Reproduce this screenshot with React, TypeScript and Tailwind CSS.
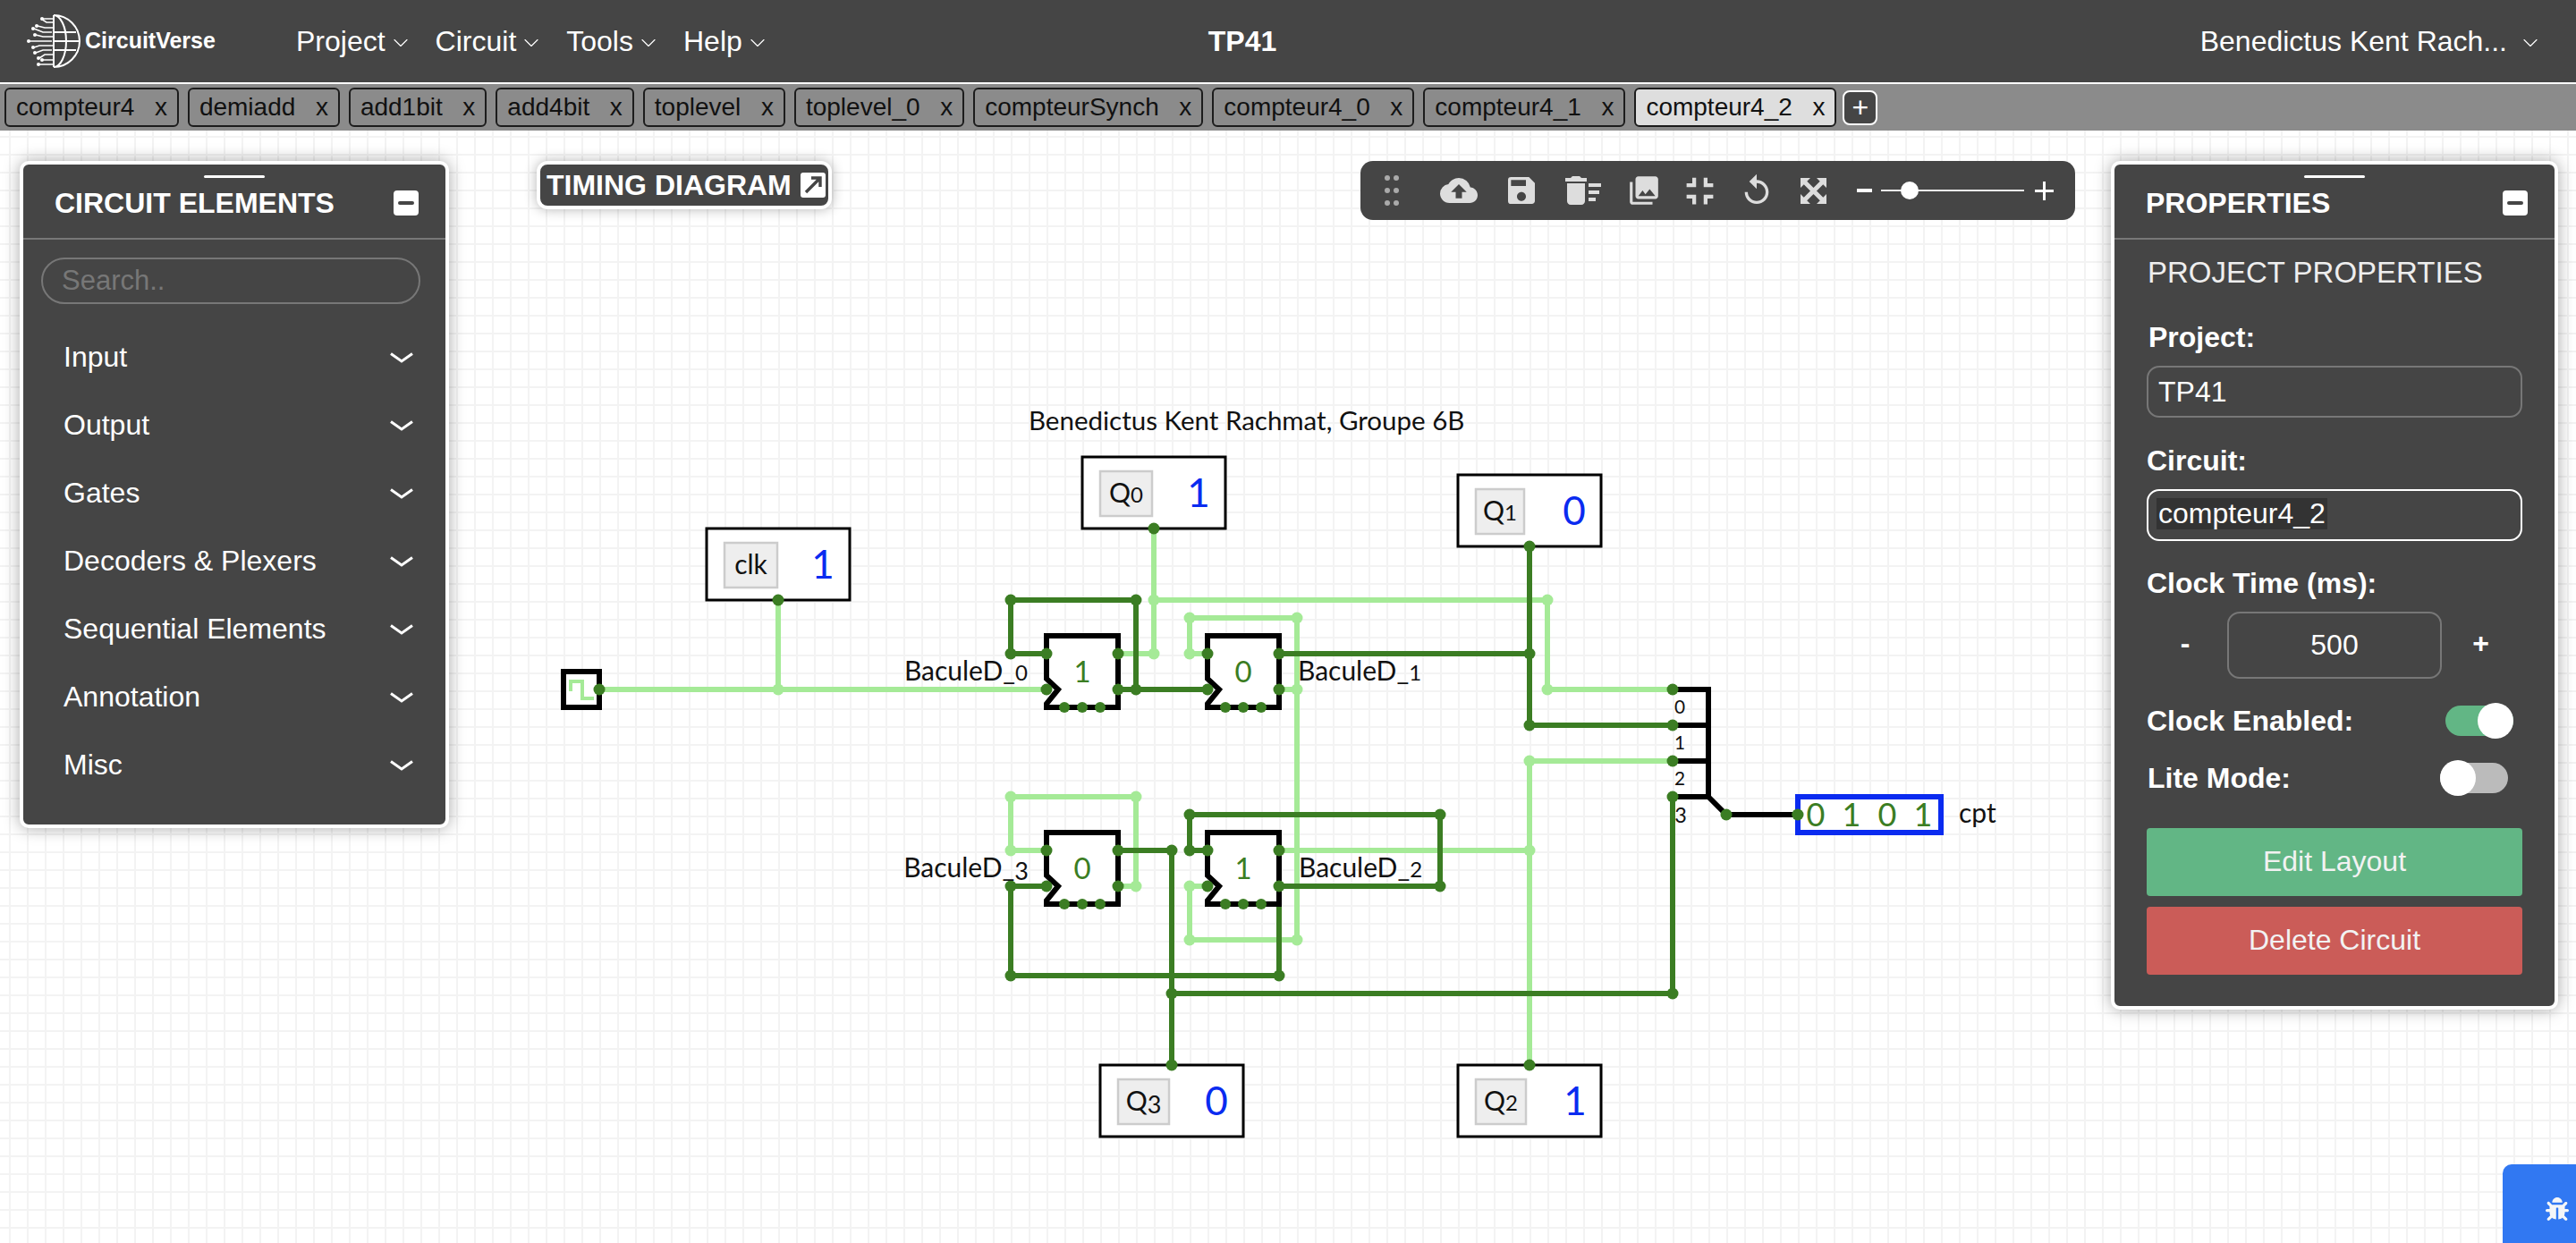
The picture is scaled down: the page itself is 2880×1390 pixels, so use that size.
import { ChevronDown } from 'lucide-react';
import { FaBug } from 'react-icons/fa';
import {
  MdCloudUpload,
  MdDeleteSweep,
  MdFullscreenExit,
  MdPhotoLibrary,
  MdReplay,
  MdSave,
} from 'react-icons/md';

const DARK = '#3b7d23';
const LIGHT = '#a5ea97';
const BLUE = '#0a2bf0';

const tabs = ['compteur4', 'demiadd', 'add1bit', 'add4bit', 'toplevel', 'toplevel_0', 'compteurSynch', 'compteur4_0', 'compteur4_1', 'compteur4_2'];
const menus = ['Project', 'Circuit', 'Tools', 'Help'];
const categories = ['Input', 'Output', 'Gates', 'Decoders & Plexers', 'Sequential Elements', 'Annotation', 'Misc'];

// wires as svg paths, light ones go under the dark ones
const lightWires = [
  'M670 771H1170', 'M870 671V771', 'M1290 591V731H1250', 'M1290 671H1730V771H1870',
  'M1350 731H1330V691H1450V1051H1330V991H1350', 'M1430 771H1450',
  'M1170 951H1130V891H1270V991H1250', 'M1430 951H1710', 'M1710 1191V851H1870',
];
const darkWires = [
  'M1170 731H1130V671H1270V771', 'M1250 771H1350', 'M1430 731H1710', 'M1710 611V811H1870',
  'M1250 951H1310V1191', 'M1310 1111H1870V891', 'M1170 991H1130V1091H1430V991',
  'M1350 951H1330V911H1610V991H1430',
];
const lightNodes = [
  [870, 771], [1290, 671], [1290, 731], [1330, 691], [1450, 691], [1330, 731], [1450, 771], [1730, 671], [1730, 771],
  [1710, 851], [1710, 951], [1130, 891], [1270, 891], [1130, 951], [1270, 991], [1330, 991], [1330, 1051], [1450, 1051],
];
const darkNodes = [
  [670, 771], [870, 671], [1290, 591], [1710, 611], [1310, 1191], [1710, 1191],
  [1130, 671], [1270, 671], [1130, 731], [1270, 771], [1710, 731], [1710, 811], [1130, 991], [1130, 1091], [1430, 1091],
  [1310, 951], [1310, 1111], [1870, 1111], [1330, 911], [1610, 911], [1330, 951], [1610, 991],
  [1870, 771], [1870, 811], [1870, 851], [1870, 891], [1930, 911], [2010, 911],
];
const flipFlops = [
  { x: 1170, y: 711, value: '1' },
  { x: 1350, y: 711, value: '0' },
  { x: 1170, y: 931, value: '0' },
  { x: 1350, y: 931, value: '1' },
];
const probes = [
  { x: 790, y: 591, label: 'clk', value: '1', lx: 810, lw: 59, vx: 920 },
  { x: 1210, y: 511, label: 'Q0', value: '1', lx: 1230, lw: 58, vx: 1340 },
  { x: 1630, y: 531, label: 'Q1', value: '0', lx: 1650, lw: 54, vx: 1760 },
  { x: 1230, y: 1191, label: 'Q3', value: '0', lx: 1250, lw: 57, vx: 1360 },
  { x: 1630, y: 1191, label: 'Q2', value: '1', lx: 1650, lw: 56, vx: 1761 },
];

// the canvas font has old style figures, so digits sit lower and smaller
function OldStyle({ text }: { text: string }) {
  return (
    <>
      {text.split(/(\d)/).map((part, i) => {
        if (!/\d/.test(part)) return part;
        if (part === '3' || part === '6') {
          return part === '3' ? <tspan key={i} fontSize="0.9em" dy="0.12em">{part}</tspan> : <tspan key={i}>{part}</tspan>;
        }
        return <tspan key={i} fontSize="0.8em">{part}</tspan>;
      })}
    </>
  );
}

function Logo() {
  return (
    <svg width="62" height="62" viewBox="0 0 62 62" fill="none" stroke="white" strokeWidth="2">
      <path d="M30 2A29 29 0 0 1 30 60M30 2A14 29 0 0 1 30 60M30 2V60M30 21H55M30 31H59M30 41H55" />
      <path d="M30 6H18M30 10H22L16 6M30 16H20L12 14M28 21H18L8 17M30 26H18L10 24M28 31H2M30 36H14L8 38M28 41H18L10 44M30 46H20L14 50M30 52H18M30 57H14" strokeWidth="1.6" />
      <g fill="white" stroke="none">
        <circle cx="17" cy="6" r="2" /><circle cx="11" cy="14" r="2" /><circle cx="7" cy="17" r="2" />
        <circle cx="9" cy="24" r="2" /><circle cx="2" cy="31" r="2" /><circle cx="7" cy="38" r="2" />
        <circle cx="9" cy="44" r="2" /><circle cx="13" cy="50" r="2" /><circle cx="17" cy="52" r="2" /><circle cx="13" cy="57" r="2" />
      </g>
    </svg>
  );
}

function Navbar() {
  return (
    <nav className="flex h-[92px] shrink-0 items-center bg-[#454545] text-[32px] text-white">
      <div className="ml-[30px] flex w-[270px] items-center gap-[3px]">
        <Logo />
        <span className="text-[25px] font-bold">CircuitVerse</span>
      </div>
      <div className="ml-[31px] flex items-center gap-[25px]">
        {menus.map((m) => (
          <div key={m} className="flex items-center gap-[3px]">
            <span>{m}</span>
            <ChevronDown size={28} strokeWidth={1} className="mt-[3px]" />
          </div>
        ))}
      </div>
      <span className="ml-[490px] font-bold">TP41</span>
      <div className="ml-auto mr-[37px] flex items-center gap-[12px]">
        <span>Benedictus Kent Rach...</span>
        <ChevronDown size={28} strokeWidth={1} className="mt-[3px]" />
      </div>
    </nav>
  );
}

function TabBar() {
  return (
    <div className="mt-[2px] flex h-[52px] shrink-0 items-center gap-[10px] bg-[#8b8b8b] pl-[5px] text-[28px] text-[#111]">
      {tabs.map((t) => (
        <div
          key={t}
          className={
            t === 'compteur4_2'
              ? 'flex h-[44px] items-center gap-[22.6px] rounded-[6px] border-2 border-[#1c1c1c] bg-[#dedede] px-[11px]'
              : 'flex h-[44px] items-center gap-[22.6px] rounded-[6px] border-2 border-[#1c1c1c] px-[11px]'
          }
        >
          <span>{t}</span>
          <span>x</span>
        </div>
      ))}
      <div className="-ml-[3px] flex h-[39px] w-[39px] items-center justify-center rounded-[8px] border-2 border-white bg-[#454545] text-[32px] text-white">+</div>
    </div>
  );
}

function MinusButton() {
  return (
    <div className="flex h-[28px] w-[28px] items-center justify-center rounded-[4px] bg-white">
      <div className="h-[4px] w-[18px] rounded-full bg-[#454545]" />
    </div>
  );
}

function PanelHeader({ title }: { title: string }) {
  return (
    <div className="relative flex h-[84px] items-center justify-between border-b-2 border-[#777] pb-[2px] pl-[35px] pr-[30px] text-[32px] font-bold text-white">
      <div className="absolute left-1/2 top-[12px] h-[3px] w-[68px] -translate-x-1/2 rounded-full bg-white" />
      <span className="mt-[5px]">{title}</span>
      <div className="mt-[5px]">
        <MinusButton />
      </div>
    </div>
  );
}

function ElementsPanel() {
  return (
    <div className="absolute left-[22px] top-[34px] w-[480px] rounded-[10px] border-4 border-white bg-[#454545] pb-[29px] shadow-[0_0_18px_rgba(0,0,0,0.35)]">
      <PanelHeader title="CIRCUIT ELEMENTS" />
      <input
        readOnly
        placeholder="Search.."
        className="ml-[20px] mt-[20px] block h-[52px] w-[424px] rounded-full border-2 border-[#777] bg-transparent px-[21px] text-[31px] placeholder:text-[#777]"
      />
      <div className="mt-[21px]">
        {categories.map((c) => (
          <div key={c} className="flex h-[76px] items-center justify-between pl-[45px] pr-[36px] text-[32px] text-white">
            <span>{c}</span>
            <svg width="26" height="14" viewBox="0 0 26 14" fill="none" stroke="white" strokeWidth="3" className="mt-[2px]">
              <path d="M1 2.5L13 11L25 2.5" />
            </svg>
          </div>
        ))}
      </div>
    </div>
  );
}

function Toggle({ on }: { on: boolean }) {
  return (
    <div className={on ? 'relative mr-[10px] h-[34px] w-[76px] rounded-full bg-[#62b685]' : 'relative mr-[16px] h-[34px] w-[76px] rounded-full bg-[#bbbbbb]'}>
      <div className={on ? 'absolute -top-[3px] right-0 h-[40px] w-[40px] rounded-full bg-white' : 'absolute -top-[3px] left-0 h-[40px] w-[40px] rounded-full bg-white'} />
    </div>
  );
}

function PropertiesPanel() {
  return (
    <div className="absolute right-[20px] top-[34px] w-[500px] rounded-[10px] border-4 border-white bg-[#454545] pb-[35px] text-[32px] text-white shadow-[0_0_18px_rgba(0,0,0,0.35)]">
      <PanelHeader title="PROPERTIES" />
      <div className="w-[456px] pl-[36px]">
        <div className="ml-[1px] mt-[17px] h-[40px] text-[33px] leading-[40px] text-[#eee]">PROJECT PROPERTIES</div>
        <div className="ml-[2px] mt-[32px] h-[40px] font-bold leading-[40px]">Project:</div>
        <input readOnly value="TP41" className="mt-[12px] block h-[58px] w-[420px] rounded-[14px] border-2 border-[#777] bg-transparent px-[11px]" />
        <div className="mt-[28px] h-[40px] font-bold leading-[40px]">Circuit:</div>
        <div className="mt-[12px] flex h-[58px] w-[420px] items-center rounded-[14px] border-2 border-white px-[9px] pb-[4px]">
          <span className="bg-[#333] px-[2px] leading-[35px]">compteur4_2</span>
        </div>
        <div className="mt-[27px] h-[40px] font-bold leading-[40px]">Clock Time (ms):</div>
        <div className="mt-[12px] flex h-[75px] w-[420px] items-center font-bold">
          <span className="w-[90px] pb-[6px] pr-[4px] text-center">-</span>
          <input readOnly value="500" className="h-[75px] w-[240px] rounded-[14px] border-2 border-[#777] bg-transparent text-center font-normal" />
          <span className="w-[90px] pb-[6px] pr-[3px] text-center">+</span>
        </div>
        <div className="mt-[27px] flex h-[40px] w-[420px] items-center justify-between font-bold">
          <span>Clock Enabled:</span>
          <Toggle on />
        </div>
        <div className="mt-[24px] flex h-[40px] w-[420px] items-center justify-between font-bold">
          <span className="ml-[1px]">Lite Mode:</span>
          <Toggle on={false} />
        </div>
        <button className="mt-[36px] block h-[76px] w-[420px] rounded-[4px] bg-[#62b685] pb-[2px] text-[#f2f2f2]">Edit Layout</button>
        <button className="mt-[12px] block h-[76px] w-[420px] rounded-[4px] bg-[#cb5c58] pb-[2px] text-[#f2f2f2]">Delete Circuit</button>
      </div>
    </div>
  );
}

function TimingButton() {
  return (
    <div className="absolute left-[600px] top-[34px] flex h-[54px] w-[330px] items-center rounded-[12px] border-4 border-white bg-[#454545] pl-[7px] text-[32px] font-bold text-white shadow-[0_0_14px_rgba(0,0,0,0.3)]">
      <span>TIMING DIAGRAM</span>
      <svg width="28" height="28" viewBox="0 0 28 28" className="ml-[10px]">
        <rect width="28" height="28" rx="3" fill="white" />
        <path d="M6 22L21 7M12 6H22V16" fill="none" stroke="#454545" strokeWidth="3.4" />
      </svg>
    </div>
  );
}

function Toolbar() {
  return (
    <div className="absolute left-[1521px] top-[34px] flex h-[66px] w-[799px] items-center rounded-[14px] bg-[#454545] text-[#dddddd]">
      <svg width="16" height="34" viewBox="0 0 16 34" fill="#aaaaaa" className="ml-[27px]">
        <circle cx="3" cy="3" r="3" /><circle cx="13" cy="3" r="3" />
        <circle cx="3" cy="17" r="3" /><circle cx="13" cy="17" r="3" />
        <circle cx="3" cy="31" r="3" /><circle cx="13" cy="31" r="3" />
      </svg>
      <MdCloudUpload size={42} className="ml-[46px] shrink-0" />
      <MdSave size={40} className="ml-[29px] shrink-0" />
      <MdDeleteSweep size={48} className="ml-[25px] shrink-0" />
      <MdPhotoLibrary size={38} className="ml-[25px] shrink-0" />
      <MdFullscreenExit size={51} className="ml-[18px] shrink-0" />
      <MdReplay size={40} className="ml-[18px] shrink-0" />
      <svg width="29" height="29" viewBox="0 0 29 29" fill="#dddddd" className="ml-[29px] shrink-0">
        <path d="M0 0H11L0 11ZM29 0H18L29 11ZM0 29H11L0 18ZM29 29H18L29 18Z" />
        <path d="M4 4L25 25M25 4L4 25" stroke="#dddddd" strokeWidth="5" />
      </svg>
      <div className="ml-[34px] h-[4px] w-[17px] bg-white" />
      <div className="relative ml-[10px] h-[2px] w-[160px] bg-[#eeeeee]">
        <div className="absolute -top-[9px] left-[22px] h-[20px] w-[20px] rounded-full bg-white" />
      </div>
      <svg width="21" height="21" viewBox="0 0 21 21" stroke="white" strokeWidth="3" className="ml-[12px]">
        <path d="M0 10.5H21M10.5 0V21" />
      </svg>
    </div>
  );
}

function Circuit() {
  return (
    <svg viewBox="0 146 2880 1244" className="absolute inset-0 h-full w-full font-['Lato',sans-serif]">
      <g fill="none" strokeWidth="6">
        {lightWires.map((d) => <path key={d} d={d} stroke={LIGHT} />)}
        {darkWires.map((d) => <path key={d} d={d} stroke={DARK} />)}
        <path d="M1870 771H1910V891H1870M1870 811H1910M1870 851H1910M1910 891L1930 911H2010" stroke="black" />
      </g>

      {/* clock */}
      <rect x="630" y="751" width="40" height="40" fill="white" stroke="black" strokeWidth="6" />
      <path d="M638 773V762H651V781H664" fill="none" stroke={LIGHT} strokeWidth="4" />

      {flipFlops.map((f) => (
        <g key={`${f.x}-${f.y}`}>
          <path
            d={`M${f.x} ${f.y}H${f.x + 80}V${f.y + 80}H${f.x}V${f.y + 76}L${f.x + 13} ${f.y + 60}L${f.x} ${f.y + 48}Z`}
            fill="white"
            stroke="black"
            strokeWidth="6"
          />
          <text x={f.x + 40} y={f.y + 52} textAnchor="middle" fontSize="33" fill={DARK}>{f.value}</text>
          <g fill={DARK}>
            <circle cx={f.x} cy={f.y + 20} r="6.5" />
            <circle cx={f.x + 80} cy={f.y + 20} r="6.5" />
            <circle cx={f.x} cy={f.y + 60} r="6.5" />
            <circle cx={f.x + 80} cy={f.y + 60} r="6.5" />
            <circle cx={f.x + 20} cy={f.y + 80} r="6" />
            <circle cx={f.x + 40} cy={f.y + 80} r="6" />
            <circle cx={f.x + 60} cy={f.y + 80} r="6" />
          </g>
        </g>
      ))}

      {probes.map((p) => (
        <g key={p.label}>
          <rect x={p.x} y={p.y} width="160" height="80" fill="white" stroke="black" strokeWidth="3" />
          <rect x={p.lx} y={p.y + 16} width={p.lw} height="50" fill="#eeeeee" stroke="#cccccc" strokeWidth="2.5" />
          <text x={p.lx + p.lw / 2} y={p.y + 51} textAnchor="middle" fontSize="30" fill="#111">
            <OldStyle text={p.label} />
          </text>
          <text x={p.vx} y={p.y + 56} textAnchor="middle" fontSize="44" fill={BLUE}>{p.value}</text>
        </g>
      ))}

      {lightNodes.map(([x, y]) => <circle key={`l${x}-${y}`} cx={x} cy={y} r="6.5" fill={LIGHT} />)}
      {darkNodes.map(([x, y]) => <circle key={`d${x}-${y}`} cx={x} cy={y} r="6.5" fill={DARK} />)}

      <g fontSize="30" fill="#111">
        <text x="1150" y="481" fontSize="29.5"><OldStyle text="Benedictus Kent Rachmat, Groupe 6B" /></text>
        <text x="1149" y="761" textAnchor="end"><OldStyle text="BaculeD_0" /></text>
        <text x="1451" y="761"><OldStyle text="BaculeD_1" /></text>
        <text x="1150" y="981" textAnchor="end"><OldStyle text="BaculeD_3" /></text>
        <text x="1452" y="981"><OldStyle text="BaculeD_2" /></text>
        <text x="2190" y="920">cpt</text>
      </g>

      <g fontSize="26" fill="#111" textAnchor="middle">
        <text x="1878" y="798"><OldStyle text="0" /></text>
        <text x="1878" y="838"><OldStyle text="1" /></text>
        <text x="1878" y="878"><OldStyle text="2" /></text>
        <text x="1879" y="917"><OldStyle text="3" /></text>
      </g>

      {/* digital output */}
      <rect x="2010" y="891" width="160" height="40" fill="white" stroke={BLUE} strokeWidth="6" />
      <g fontSize="36" fill={DARK} textAnchor="middle">
        <text x="2030" y="924">0</text>
        <text x="2070" y="924">1</text>
        <text x="2110" y="924">0</text>
        <text x="2150" y="924">1</text>
      </g>
      <circle cx="2010" cy="911" r="6.5" fill={DARK} />
    </svg>
  );
}

export default function App() {
  return (
    <div className="flex h-[1390px] w-full flex-col overflow-hidden bg-white font-['Liberation_Sans',Arial,sans-serif]">
      <Navbar />
      <TabBar />
      <main className="relative flex-1 overflow-hidden bg-white bg-[linear-gradient(to_right,#f3f3f3_2px,transparent_2px),linear-gradient(to_bottom,#f3f3f3_2px,transparent_2px)] bg-[length:20px_20px] bg-[position:10px_6px]">
        <Circuit />
        <ElementsPanel />
        <TimingButton />
        <Toolbar />
        <PropertiesPanel />
        <div className="absolute bottom-0 right-0 flex h-[88px] w-[82px] items-center justify-end rounded-tl-[10px] bg-[#3178f2] pr-[8px] pt-[12px] text-[#f4f6f8]">
          <FaBug size={26} />
        </div>
      </main>
    </div>
  );
}
